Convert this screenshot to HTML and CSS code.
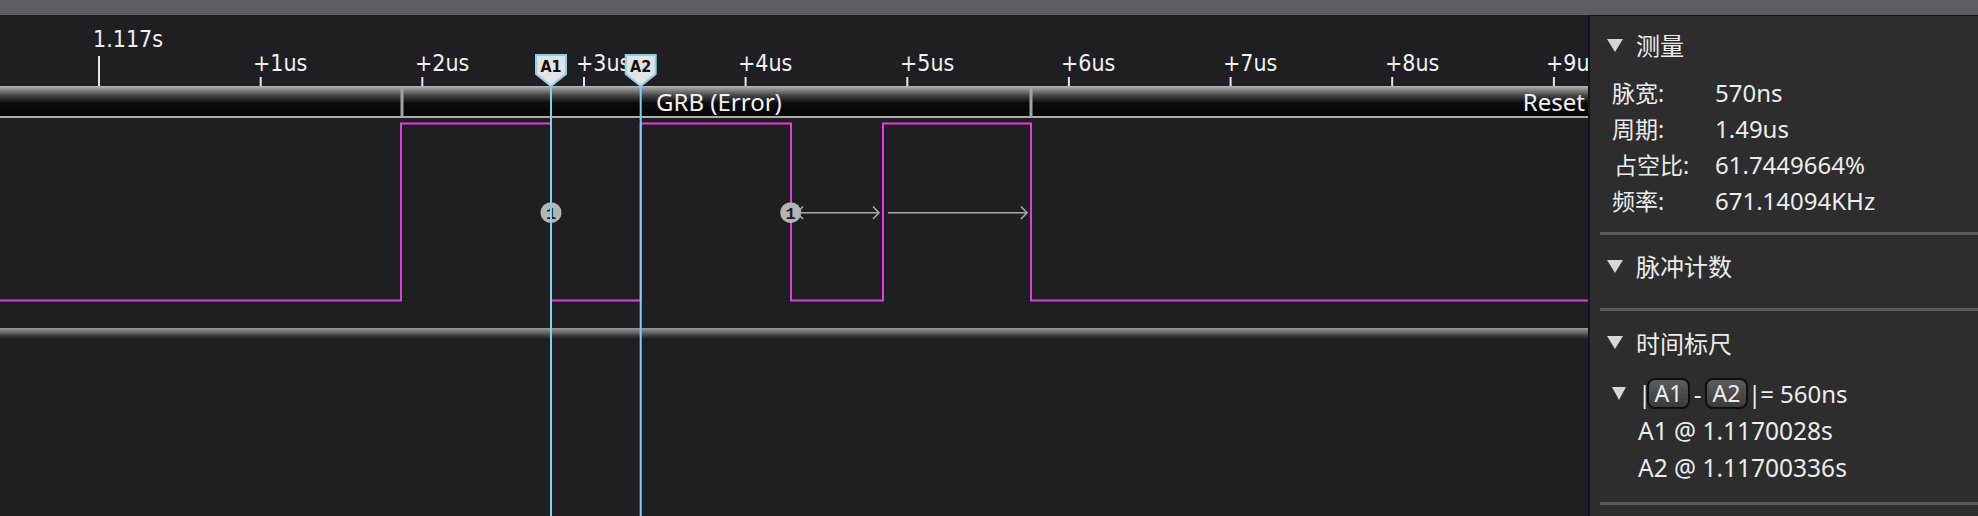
FILE: index.html
```html
<!DOCTYPE html>
<html lang="zh">
<head>
<meta charset="utf-8">
<title>Waveform</title>
<link rel="stylesheet" href="styles.css">
</head>
<body>
<div class="app">
  <div class="topbar"></div>
  <div class="main">
    <div class="wave">
      <svg class="canvas" width="1588" height="501" viewBox="0 15 1588 501" xmlns="http://www.w3.org/2000/svg">
        <defs>
          <linearGradient id="busg" x1="0" y1="0" x2="0" y2="1">
            <stop offset="0" stop-color="#b8b8b8"/>
            <stop offset="0.1" stop-color="#8e8e8e"/>
            <stop offset="0.3" stop-color="#474747"/>
            <stop offset="0.55" stop-color="#0b0b0b"/>
            <stop offset="1" stop-color="#040404"/>
          </linearGradient>
          <linearGradient id="band2" x1="0" y1="0" x2="0" y2="1">
            <stop offset="0" stop-color="#9a9a9a"/>
            <stop offset="0.35" stop-color="#6e6e70"/>
            <stop offset="0.75" stop-color="#38383c"/>
            <stop offset="1" stop-color="#202024"/>
          </linearGradient>
        </defs>

        <!-- ruler ticks -->
        <g class="ticks">
          <rect x="98" y="56" width="2" height="30"/>
          <rect x="259.7" y="77" width="2" height="9"/>
          <rect x="421.3" y="77" width="2" height="9"/>
          <rect x="583" y="77" width="2" height="9"/>
          <rect x="744.6" y="77" width="2" height="9"/>
          <rect x="906.3" y="77" width="2" height="9"/>
          <rect x="1067.9" y="77" width="2" height="9"/>
          <rect x="1229.6" y="77" width="2" height="9"/>
          <rect x="1391.2" y="77" width="2" height="9"/>
          <rect x="1552.9" y="77" width="2" height="9"/>
        </g>
        <g class="rl">
          <text x="93" y="47">1.117s</text>
          <text x="253" y="71">+1us</text>
          <text x="415" y="71">+2us</text>
          <text x="576" y="71">+3us</text>
          <text x="738" y="71">+4us</text>
          <text x="900" y="71">+5us</text>
          <text x="1061" y="71">+6us</text>
          <text x="1223" y="71">+7us</text>
          <text x="1385" y="71">+8us</text>
          <text x="1546" y="71">+9us</text>
        </g>

        <!-- bus row -->
        <rect x="0" y="86" width="1588" height="31" fill="url(#busg)"/>
        <rect x="0" y="116" width="1588" height="2" fill="#ababab"/>
        <rect x="400.5" y="87" width="3" height="30" fill="#a2a2a2"/>
        <rect x="1029.5" y="87" width="3" height="30" fill="#a2a2a2"/>
        <text class="bus" x="656" y="111">GRB (Error)</text>
        <text class="bus" x="1585" y="111" text-anchor="end">Reset</text>

        <!-- lower channel band -->
        <rect x="0" y="328" width="1588" height="11" fill="url(#band2)"/>

        <!-- signal -->
        <polyline class="sig" points="0,300.5 401,300.5 401,123.5 551,123.5 551,300.5 640.7,300.5 640.7,123.5 791,123.5 791,300.5 883,300.5 883,123.5 1031,123.5 1031,300.5 1588,300.5"/>

        <!-- width arrows -->
        <g class="arr">
          <line x1="797" y1="212.7" x2="879" y2="212.7"/>
          <polyline points="873,206.5 879,212.7 873,219"/>
          <polyline points="803,206.5 797,212.7 803,219"/>
          <line x1="888" y1="212.7" x2="1027" y2="212.7"/>
          <polyline points="1021,206.5 1027,212.7 1021,219"/>
        </g>

        <!-- edge badges -->
        <g class="badge">
          <circle cx="551" cy="212.7" r="10.5"/>
          <text x="551" y="218.5">1</text>
          <circle cx="790.7" cy="212.7" r="10.5"/>
          <text x="790.7" y="218.5">1</text>
        </g>

        <!-- cursors -->
        <g class="cur">
          <line x1="551" y1="86" x2="551" y2="516"/>
          <line x1="640.7" y1="86" x2="640.7" y2="516"/>
          <polygon points="536,55 566,55 566,74 551,86 536,74"/>
          <polygon points="625.7,55 655.7,55 655.7,74 640.7,86 625.7,74"/>
        </g>
        <g class="curtxt">
          <text x="551" y="71.5">A1</text>
          <text x="640.7" y="71.5">A2</text>
        </g>
      </svg>
    </div>

    <aside class="panel">
      <section class="sec sec-first">
        <div class="hd"><span class="tri"></span><span class="hd-t">测量</span></div>
        <div class="kv">
          <span class="k">脉宽:</span><span class="v">570ns</span>
          <span class="k">周期:</span><span class="v">1.49us</span>
          <span class="k k3">占空比:</span><span class="v">61.7449664%</span>
          <span class="k">频率:</span><span class="v">671.14094KHz</span>
        </div>
        <div class="sep sep1"></div>
      </section>

      <section class="sec">
        <div class="hd"><span class="tri"></span><span class="hd-t">脉冲计数</span></div>
        <div class="sep sep2"></div>
      </section>

      <section class="sec">
        <div class="hd"><span class="tri"></span><span class="hd-t">时间标尺</span></div>
        <div class="delta">
          <span class="tri tri-s"></span>
          <span class="pipe p1">|</span>
          <span class="pill">A1</span>
          <span class="dash">-</span>
          <span class="pill">A2</span>
          <span class="pipe p2">|</span>
          <span class="eq">=</span>
          <span class="dv">560ns</span>
        </div>
        <div class="at">A1 @ 1.1170028s</div>
        <div class="at">A2 @ 1.11700336s</div>
        <div class="sep sep3"></div>
      </section>
    </aside>
  </div>
</div>
</body>
</html>
```

FILE: styles.css
```css
html, body {
  margin: 0;
  padding: 0;
  background: #1f1f23;
}

body {
  width: 1978px;
  height: 516px;
  overflow: hidden;
}

.app {
  display: flex;
  flex-direction: column;
  height: 516px;
}

.topbar {
  flex: none;
  height: 15px;
  background: #5a5d62;
}

.main {
  flex: 1;
  display: flex;
  min-height: 0;
}

.wave {
  flex: none;
  width: 1588px;
  overflow: hidden;
  background: #1f1f23;
}

.canvas {
  display: block;
}

.ticks rect {
  fill: #e6e6e6;
}

.rl text {
  fill: #f0f0f0;
  font-family: "DejaVu Sans Condensed", "DejaVu Sans", sans-serif;
  font-stretch: condensed;
  font-size: 23px;
}

.bus {
  fill: #f2f2f2;
  font-family: "Noto Sans", "Open Sans", sans-serif;
  font-size: 24px;
}

.sig {
  fill: none;
  stroke: #e23fe2;
  stroke-width: 2;
}

.arr line,
.arr polyline {
  fill: none;
  stroke: #a9a9a9;
  stroke-width: 1.6;
}

.badge circle {
  fill: #b4b4b4;
}

.badge text {
  fill: #1e1e1e;
  font-family: "Liberation Mono", monospace;
  font-weight: bold;
  font-size: 17px;
  text-anchor: middle;
}

.cur line {
  stroke: #88cde8;
  stroke-width: 2;
}

.cur polygon {
  fill: #e3e3e3;
  stroke: #8ecfe8;
  stroke-width: 2;
  stroke-linejoin: miter;
}

.curtxt text {
  fill: #111;
  font-family: "DejaVu Sans Condensed", "DejaVu Sans", sans-serif;
  font-stretch: condensed;
  font-weight: bold;
  font-size: 16px;
  text-anchor: middle;
}

/* side panel */
.panel {
  flex: 1;
  min-width: 0;
  background: #2d2d2d;
  border-left: 2px solid #151517;
  border-top: 1px solid #151517;
  color: #ececec;
  font-family: "Noto Sans", "Noto Sans CJK SC", sans-serif;
  font-size: 24px;
}

.sec {
  padding-top: 13.5px;
}

.sec-first {
  padding-top: 11px;
}

.hd {
  display: flex;
  align-items: center;
  height: 36px;
  padding-left: 17px;
  gap: 13px;
}

.hd-t {
  font-size: 24px;
  line-height: 36px;
  font-family: "Noto Sans CJK SC", sans-serif;
}

.tri {
  display: block;
  width: 0;
  height: 0;
  border-left: 8px solid transparent;
  border-right: 8px solid transparent;
  border-top: 13px solid #d6d6d6;
}

.kv {
  display: grid;
  grid-template-columns: 103px 1fr;
  grid-auto-rows: 36px;
  align-items: center;
  margin-top: 11px;
  padding-left: 22px;
  font-size: 24px;
}

.k {
  font-size: 23px;
}

.k3 {
  padding-left: 2px;
}

.sep {
  height: 3px;
  margin-left: 10px;
  background: #5a5a5e;
}

.sep1 {
  margin-top: 13.5px;
}

.sep2 {
  margin-top: 24px;
}

.sep3 {
  margin-top: 16px;
}

.delta {
  display: flex;
  align-items: center;
  height: 38px;
  margin-top: 13.5px;
  padding-left: 22px;
}

.tri-s {
  border-left-width: 7.5px;
  border-right-width: 7.5px;
  margin-right: 12px;
}

.pipe {
  display: inline-block;
  text-align: center;
  width: 9px;
}

.pill {
  box-sizing: border-box;
  width: 43px;
  height: 31px;
  border: 2px solid #0e0e0e;
  border-radius: 8px;
  background: linear-gradient(#5c5c5c, #3a3a3a);
  display: flex;
  align-items: center;
  justify-content: center;
  font-size: 23px;
}

.dash {
  width: 15px;
  text-align: center;
}

.eq {
  width: 20px;
  text-align: center;
}

.dv {
  margin-left: 3px;
}

.at {
  height: 37px;
  line-height: 37px;
  padding-left: 48px;
  font-size: 24.5px;
}
```
